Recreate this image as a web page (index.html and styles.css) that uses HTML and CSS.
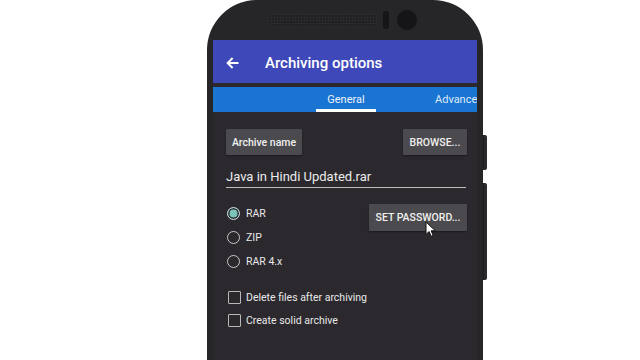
FILE: index.html
```html
<!DOCTYPE html>
<html>
<head>
<meta charset="utf-8">
<link rel="stylesheet" href="styles.css">
</head>
<body>
<div class="phone">
  <div class="phone-top">
    <span class="grille"></span>
    <span class="sensor"></span>
    <span class="camera"></span>
  </div>
  <div class="screen">
    <header class="appbar">
      <svg class="back" width="13" height="12" viewBox="0 0 13 12"><path d="M12.5 6H1.8M6.6 1L1.6 6l5 5" fill="none" stroke="#fff" stroke-width="1.9"/></svg>
      <h1 class="title">Archiving options</h1>
    </header>
    <nav class="tabs">
      <span class="tab active">General</span>
      <span class="tab">Advanced</span>
    </nav>
    <main class="content">
      <div class="row-buttons">
        <span class="btn btn-name">Archive name</span>
        <span class="btn btn-browse">BROWSE...</span>
      </div>
      <div class="field">Java in Hindi Updated.rar</div>
      <div class="format-row">
        <div class="radios">
          <div class="radio-item"><span class="radio checked"></span><span class="label">RAR</span></div>
          <div class="radio-item"><span class="radio"></span><span class="label">ZIP</span></div>
          <div class="radio-item"><span class="radio"></span><span class="label">RAR 4.x</span></div>
        </div>
        <span class="btn btn-pass">SET PASSWORD...</span>
      </div>
      <div class="checks">
        <div class="check-item"><span class="box"></span><span class="label">Delete files after archiving</span></div>
        <div class="check-item"><span class="box"></span><span class="label">Create solid archive</span></div>
      </div>
    </main>
  </div>
  <span class="side-btn side-1"></span>
  <span class="side-btn side-2"></span>
  <svg class="cursor" width="11" height="16" viewBox="0 0 11 16"><path d="M1 1v12.5l3-3 2.2 4.8 2-0.9-2.1-4.6h4.3z" fill="#fff" stroke="#111" stroke-width="1"/></svg>
</div>
</body>
</html>
```

FILE: styles.css
```css
html, body {
  margin: 0;
  padding: 0;
  background: #ffffff;
  overflow: hidden;
  font-family: Roboto, "Liberation Sans", sans-serif;
}
.phone {
  position: relative;
  margin-left: 207px;
  width: 276px;
  height: 360px;
  background: #262528;
  border-radius: 50px 50px 0 0;
  display: flex;
  flex-direction: column;
}
.phone-top {
  height: 40px;
  display: flex;
  align-items: center;
  padding-left: 61px;
}
.grille {
  width: 109px;
  height: 13px;
  background-color: #1f1e21;
  background-image: repeating-linear-gradient(90deg, #29282b 0 1px, transparent 1px 3px), repeating-linear-gradient(0deg, #29282b 0 1px, transparent 1px 3px);
  border-radius: 2px;
}
.sensor {
  width: 6px;
  height: 18px;
  margin-left: 6px;
  border-radius: 3px;
  background: #151417;
}
.camera {
  width: 20px;
  height: 20px;
  margin-left: 8px;
  border-radius: 50%;
  background: #151417;
}
.screen {
  flex: 1;
  margin: 0 6px;
  background: #2b292e;
  display: flex;
  flex-direction: column;
}
.appbar {
  height: 43px;
  background: #3e48b8;
  display: flex;
  align-items: center;
  padding-left: 13px;
}
.back {
  margin-top: 2px;
}
.title {
  margin: 2px 0 0 26px;
  font-size: 15px;
  font-weight: 500;
  color: #ffffff;
}
.tabs {
  margin-top: 4px;
  height: 25px;
  background: #1a74d2;
  display: flex;
  overflow: hidden;
  white-space: nowrap;
}
.tab {
  flex-shrink: 0;
  font-size: 11px;
  color: #dfe9f7;
  display: flex;
  align-items: center;
  justify-content: center;
  box-sizing: border-box;
}
.tab.active {
  margin-left: 103px;
  width: 60px;
  color: #eef3fb;
  border-bottom: 3px solid #ffffff;
  padding-top: 3px;
}
.tab:not(.active) {
  margin-left: 59px;
}
.content {
  padding: 17px 10px 0 13px;
  color: #e6e6e6;
}
.btn {
  display: flex;
  align-items: center;
  justify-content: center;
  background: #4b4a4e;
  color: #f0f0f0;
  font-size: 10.5px;
  font-weight: 500;
  border-radius: 1px;
  box-shadow: 0 1px 2px rgba(0,0,0,0.4);
}
.row-buttons {
  display: flex;
  justify-content: space-between;
}
.btn-name {
  width: 76px;
  height: 26px;
}
.btn-browse {
  width: 64px;
  height: 26px;
}
.field {
  margin-top: 14px;
  padding-bottom: 2px;
  border-bottom: 1px solid #bdbdbd;
  font-size: 13px;
  color: #ececec;
  line-height: 16px;
  margin-right: 1px;
}
.format-row {
  display: flex;
  justify-content: space-between;
  align-items: flex-start;
  margin-top: 13px;
}
.radios {
  display: flex;
  flex-direction: column;
}
.radio-item, .check-item {
  height: 24px;
  display: flex;
  align-items: center;
}
.radio {
  width: 11px;
  height: 11px;
  margin-left: 1px;
  border: 1.6px solid #c7c7c7;
  border-radius: 50%;
  box-sizing: content-box;
}
.radio.checked {
  border-color: #c9d8d6;
  background: #7cc3b9;
  box-shadow: inset 0 0 0 1.5px #2b292e;
}
.label {
  margin-left: 6px;
  font-size: 10.5px;
  color: #e8e8e8;
}
.btn-pass {
  width: 98px;
  height: 27px;
  margin-top: 3px;
}
.checks {
  margin-top: 13px;
  display: flex;
  flex-direction: column;
}
.check-item {
  height: 23px;
}
.box {
  width: 11px;
  height: 11px;
  margin-left: 2px;
  border: 1.5px solid #b9b9b9;
  border-radius: 1px;
}
.check-item .label {
  margin-left: 5px;
}
.side-btn {
  position: absolute;
  right: -4px;
  width: 4px;
  background: #2a292c;
  border-radius: 0 2px 2px 0;
  box-shadow: inset 1px 0 0 #1c1b1e;
}
.side-1 {
  top: 135px;
  height: 35px;
}
.side-2 {
  top: 183px;
  height: 97px;
}
.cursor {
  position: absolute;
  left: 218px;
  top: 221px;
}
```
